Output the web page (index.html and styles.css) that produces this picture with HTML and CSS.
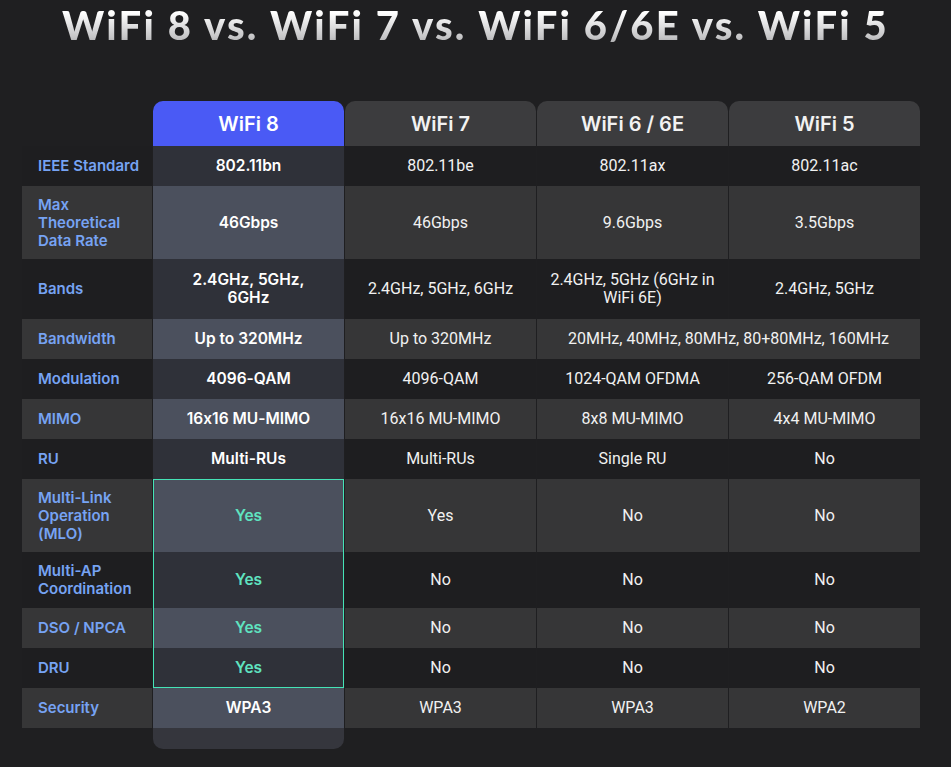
FILE: index.html
```html
<!DOCTYPE html>
<html lang="en">
<head>
<meta charset="utf-8">
<title>WiFi 8 vs. WiFi 7 vs. WiFi 6/6E vs. WiFi 5</title>
<link rel="stylesheet" href="styles.css">
</head>
<body>
<div class="page">
  <h1 class="title">WiFi 8 vs. WiFi 7 vs. WiFi 6/6E vs. WiFi 5</h1>
  <table class="cmp">
    <colgroup>
      <col class="c-label">
      <col class="c-val">
      <col class="c-val">
      <col class="c-val">
      <col class="c-val">
    </colgroup>
    <thead>
      <tr class="head">
        <th class="corner"></th>
        <th class="hd hd-main">WiFi 8</th>
        <th class="hd">WiFi 7</th>
        <th class="hd">WiFi 6 / 6E</th>
        <th class="hd">WiFi 5</th>
      </tr>
    </thead>
    <tbody>
      <tr class="dark h40">
        <th class="label">IEEE Standard</th>
        <td class="main">802.11bn</td><td>802.11be</td><td>802.11ax</td><td>802.11ac</td>
      </tr>
      <tr class="light h73">
        <th class="label">Max<br>Theoretical<br>Data Rate</th>
        <td class="main">46Gbps</td><td>46Gbps</td><td>9.6Gbps</td><td>3.5Gbps</td>
      </tr>
      <tr class="dark h60">
        <th class="label">Bands</th>
        <td class="main">2.4GHz, 5GHz,<br>6GHz</td><td>2.4GHz, 5GHz, 6GHz</td><td>2.4GHz, 5GHz (6GHz in<br>WiFi 6E)</td><td>2.4GHz, 5GHz</td>
      </tr>
      <tr class="light h40">
        <th class="label">Bandwidth</th>
        <td class="main">Up to 320MHz</td><td>Up to 320MHz</td><td colspan="2">20MHz, 40MHz, 80MHz, 80+80MHz, 160MHz</td>
      </tr>
      <tr class="dark h40">
        <th class="label">Modulation</th>
        <td class="main">4096-QAM</td><td>4096-QAM</td><td>1024-QAM OFDMA</td><td>256-QAM OFDM</td>
      </tr>
      <tr class="light h40">
        <th class="label">MIMO</th>
        <td class="main">16x16 MU-MIMO</td><td>16x16 MU-MIMO</td><td>8x8 MU-MIMO</td><td>4x4 MU-MIMO</td>
      </tr>
      <tr class="dark h40">
        <th class="label">RU</th>
        <td class="main">Multi-RUs</td><td>Multi-RUs</td><td>Single RU</td><td>No</td>
      </tr>
      <tr class="light h73">
        <th class="label">Multi-Link<br>Operation<br>(MLO)</th>
        <td class="main yes box-top">Yes</td><td>Yes</td><td>No</td><td>No</td>
      </tr>
      <tr class="dark h56">
        <th class="label">Multi-AP<br>Coordination</th>
        <td class="main yes box-mid">Yes</td><td>No</td><td>No</td><td>No</td>
      </tr>
      <tr class="light h40">
        <th class="label">DSO / NPCA</th>
        <td class="main yes box-mid">Yes</td><td>No</td><td>No</td><td>No</td>
      </tr>
      <tr class="dark h40">
        <th class="label">DRU</th>
        <td class="main yes box-bot">Yes</td><td>No</td><td>No</td><td>No</td>
      </tr>
      <tr class="light h40">
        <th class="label">Security</th>
        <td class="main">WPA3</td><td>WPA3</td><td>WPA3</td><td>WPA2</td>
      </tr>
      <tr class="foot">
        <td class="blank"></td>
        <td class="foot-main"></td>
        <td class="blank" colspan="3"></td>
      </tr>
    </tbody>
  </table>
</div>
</body>
</html>
```

FILE: styles.css
```css
* { box-sizing: border-box; }

html, body {
  margin: 0;
  padding: 0;
  background: #1f1f21;
}

.page {
  width: 951px;
  min-height: 767px;
  background: #1f1f21;
  font-family: "Roboto", "Liberation Sans", sans-serif;
  color: #f1f1f1;
}

.title {
  margin: 0;
  height: 50px;
  line-height: 50px;
  text-align: center;
  font-family: "Lato", "Noto Sans", sans-serif;
  font-weight: 900;
  font-size: 40px;
  letter-spacing: 2.2px;
  background: linear-gradient(180deg, #ffffff 25%, #c4c4c6 75%, #8e8e90 100%);
  -webkit-background-clip: text;
  background-clip: text;
  color: transparent;
}

.cmp {
  margin: 51px 0 0 21px;
  border-collapse: separate;
  border-spacing: 1px 0;
  table-layout: fixed;
  width: 900px;
}

.c-label { width: 130px; }
.c-val { width: 191px; }

.cmp th, .cmp td {
  padding: 0 10px;
  text-align: center;
  vertical-align: middle;
  font-size: 16px;
  line-height: 18px;
  font-weight: 400;
}

.head { height: 45px; }
.h40 { height: 40px; }
.h56 { height: 56px; }
.h60 { height: 60px; }
.h73 { height: 73px; }
.foot { height: 21px; }

.corner { background: transparent; }

.cmp .hd {
  background: #3c3c3e;
  border-radius: 10px 10px 0 0;
  font-family: "Inter", "Lato", sans-serif;
  font-weight: 600;
  font-size: 20px;
  color: #f2f2f2;
}

.cmp .hd-main {
  background: #4a5af5;
  color: #ffffff;
}

.dark > td, .dark > th { background: #1e1e20; }
.light > td, .light > th { background: #363637; }

.cmp .label {
  text-align: left;
  padding: 0 2px 0 16px;
  white-space: nowrap;
  font-family: "Inter", "Lato", sans-serif;
  font-weight: 600;
  font-size: 15px;
  color: #76a3f3;
  font-feature-settings: "calt" 0;
}

.cmp .main {
  font-family: "Inter", "Lato", sans-serif;
  font-weight: 600;
  font-size: 15.5px;
  color: #ffffff;
  font-feature-settings: "calt" 0;
}

.dark > .main { background: #2f3139; }
.light > .main { background: #4b505d; }

.cmp .yes { color: #5fe3c0; }

.box-top { border: 1px solid #45e3b6; border-bottom: 0; }
.box-mid { border-left: 1px solid #45e3b6; border-right: 1px solid #45e3b6; }
.box-bot { border: 1px solid #45e3b6; border-top: 0; }

.foot > .blank { background: transparent; }
.foot > .foot-main {
  background: #35363d;
  border-radius: 0 0 10px 10px;
}
```
